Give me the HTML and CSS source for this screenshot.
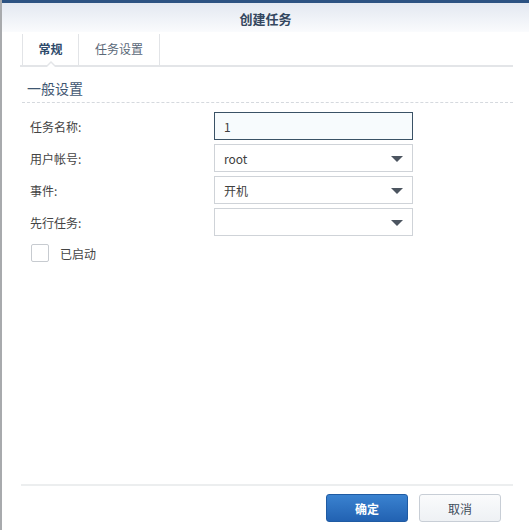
FILE: index.html
```html
<!DOCTYPE html>
<html lang="zh">
<head>
<meta charset="utf-8">
<title>创建任务</title>
<link rel="stylesheet" href="styles.css">
</head>
<body>
<div class="window">
  <div class="topbar"></div>
  <div class="header">创建任务</div>
  <div class="tabs">
    <div class="tab active">常规</div>
    <div class="tab">任务设置</div>
  </div>
  <div class="content">
    <div class="section-title">一般设置</div>
    <div class="form">
      <div class="row">
        <label class="label">任务名称:</label>
        <div class="field focused">1</div>
      </div>
      <div class="row">
        <label class="label">用户帐号:</label>
        <div class="field select">root<span class="arrow"></span></div>
      </div>
      <div class="row">
        <label class="label">事件:</label>
        <div class="field select">开机<span class="arrow"></span></div>
      </div>
      <div class="row">
        <label class="label">先行任务:</label>
        <div class="field select"><span class="arrow"></span></div>
      </div>
      <div class="check-row">
        <span class="checkbox"></span>
        <span class="check-label">已启动</span>
      </div>
    </div>
  </div>
  <div class="footer">
    <button class="btn primary">确定</button>
    <button class="btn">取消</button>
  </div>
</div>
</body>
</html>
```
FILE: styles.css
```css
* { box-sizing: border-box; }
html, body { margin: 0; padding: 0; background: #fff; }
body {
  font-family: "Noto Sans CJK SC", "Noto Sans", sans-serif;
  font-size: 12px;
  color: #3a4a5c;
}
.window {
  width: 529px;
  height: 530px;
  display: flex;
  flex-direction: column;
  border-left: 2px solid #a8aaad;
  position: relative;
}
.topbar {
  height: 3px;
  background: #2c5282;
}
.header {
  height: 29px;
  display: flex;
  align-items: center;
  justify-content: center;
  font-size: 13px;
  font-weight: bold;
  color: #34475f;
  background: linear-gradient(#e3e8f1, #fafbfd);
  padding-top: 1px;
}
.tabs {
  display: flex;
  margin: 2px 16px 0 18px;
  height: 33px;
  border-bottom: 2px solid #e3e5e8;
  padding-left: 2px;
}
.tab {
  height: 31px;
  display: flex;
  align-items: center;
  justify-content: center;
  font-size: 12px;
  color: #5a6878;
  border-right: 1px solid #e2e4e7;
  position: relative;
  padding-bottom: 3px;
}
.tab:first-child {
  border-left: 1px solid #e2e4e7;
  width: 57px;
}
.tab:nth-child(2) { width: 81px; }
.tab.active {
  color: #2e4a6a;
  font-weight: bold;
}
.tab.active::after {
  content: "";
  position: absolute;
  left: 22px;
  bottom: -2px;
  width: 0;
  height: 0;
  border-left: 6px solid transparent;
  border-right: 6px solid transparent;
  border-bottom: 6px solid #e3e5e8;
}
.tab.active::before {
  content: "";
  position: absolute;
  left: 24px;
  bottom: -2px;
  width: 0;
  height: 0;
  border-left: 4px solid transparent;
  border-right: 4px solid transparent;
  border-bottom: 4px solid #fff;
  z-index: 1;
}
.content {
  flex: 1;
  padding: 11px 16px 0 20px;
}
.section-title {
  font-size: 14px;
  color: #3f5772;
  padding-left: 5px;
  padding-bottom: 4px;
  border-bottom: 1px dashed #d5d9de;
  line-height: 20px;
}
.form {
  padding-top: 9px;
}
.row {
  display: flex;
  align-items: center;
  height: 28px;
  margin-bottom: 4px;
}
.label {
  width: 192px;
  padding-left: 8px;
  color: #444;
  font-size: 12px;
}
.field {
  width: 199px;
  height: 28px;
  border: 1px solid #cfd3d8;
  display: flex;
  align-items: center;
  padding-left: 9px;
  font-size: 12px;
  color: #404040;
  position: relative;
}
.field.focused {
  border-color: #3a5266;
  background: #f7fbfd;
}
.arrow {
  position: absolute;
  right: 9px;
  top: 11px;
  width: 0;
  height: 0;
  border-left: 6px solid transparent;
  border-right: 6px solid transparent;
  border-top: 6px solid #4c5560;
}
.check-row {
  display: flex;
  align-items: center;
  height: 26px;
  padding-left: 9px;
}
.checkbox {
  width: 18px;
  height: 18px;
  border: 1px solid #c7cbd0;
  border-radius: 2px;
  background: #fff;
}
.check-label {
  margin-left: 11px;
  color: #444;
}
.footer {
  margin: 0 16px 0 19px;
  border-top: 2px solid #eceeef;
  height: 46px;
  display: flex;
  justify-content: flex-end;
  align-items: flex-start;
  padding-top: 8px;
  padding-right: 12px;
  gap: 11px;
}
.btn {
  width: 82px;
  height: 28px;
  border: 1px solid #c8ced6;
  border-radius: 3px;
  background: linear-gradient(#fafbfc, #eef1f4);
  font-family: "Noto Sans CJK SC", "Noto Sans", sans-serif;
  font-size: 12px;
  color: #3d4c5c;
  padding: 0;
}
.btn.primary {
  border-color: #1f5ba3;
  background: linear-gradient(#3a82d0, #2262b2);
  color: #fff;
  font-weight: bold;
}
```
